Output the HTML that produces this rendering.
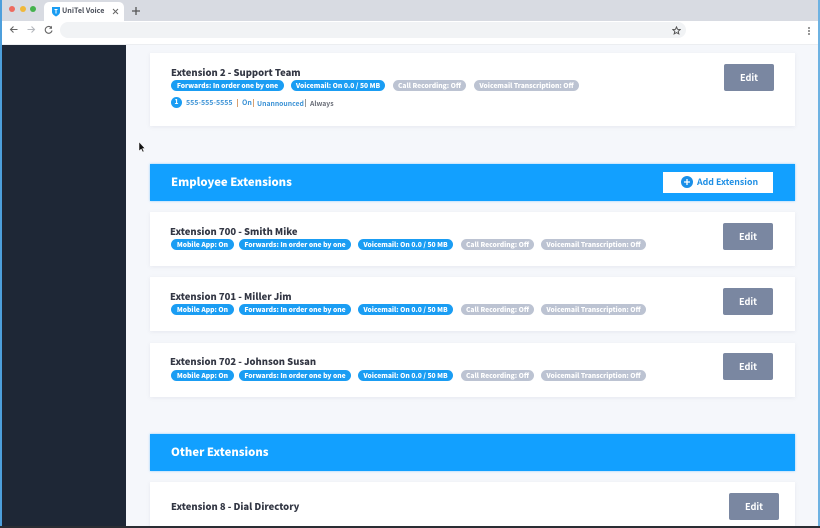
<!DOCTYPE html>
<html><head><meta charset="utf-8">
<style>
html,body{margin:0;padding:0;width:820px;height:528px;overflow:hidden;background:#f5f7fb}
body{position:relative;font-family:"Noto Sans CJK JP","Liberation Sans",sans-serif;font-weight:700;color:#3d4250}
div,span.a{position:absolute;box-sizing:border-box}
.t{white-space:nowrap;filter:blur(.35px)}
.card{background:#fff;box-shadow:0 1px 4px rgba(60,70,100,.08)}
.bar{background:#12a0ff;box-shadow:0 0 2px rgba(18,160,255,.5)}
.h{font-size:11.3px;line-height:14px;height:14px;color:#fff;left:171px;font-weight:900}
.n{font-size:9.45px;line-height:14px;height:14px;color:#333744;left:171px;font-weight:900}
.p{height:11px;border-radius:6px;background:#1a9df3;color:#fff;font-size:6.7px;line-height:11px;text-align:center;white-space:nowrap;overflow:hidden;filter:blur(.35px);font-weight:900}
.g{background:#bcc3d2}
.b{background:#7a87a1;border-radius:2px;color:#fff;font-size:9.2px;line-height:26px;height:27px;width:50px;text-align:center;filter:blur(.3px)}
</style></head><body>
<!-- browser chrome -->
<div style="left:0;top:0;width:820px;height:21px;background:#d8dbe2"></div>
<div style="left:0;top:21px;width:820px;height:24px;background:#fff"></div>
<div style="left:9px;top:6px;width:6px;height:6px;border-radius:50%;background:#ee6a5f"></div>
<div style="left:20px;top:6px;width:6px;height:6px;border-radius:50%;background:#f0b83a"></div>
<div style="left:30px;top:6px;width:6px;height:6px;border-radius:50%;background:#45b24e"></div>
<div style="left:44px;top:2px;width:80px;height:19px;background:#fff;border-radius:5px 5px 0 0"></div>
<svg style="position:absolute;left:51px;top:6px" width="10" height="11" viewBox="0 0 10 11"><path d="M1 1h8v5c0 2-2 3.500-4 4.500C3 9.500 1 8 1 6z" fill="#1a9df3"/><path d="M3.500 3.500h3M5 3.500v4" stroke="#fff" stroke-width="1"/></svg>
<div class="t" style="left:62px;top:5px;font-size:7.100px;line-height:12px;color:#4a4f5a;font-weight:700">UniTel Voice</div>
<svg style="position:absolute;left:112px;top:8px" width="7" height="7"><path d="M1 1l5 5M6 1l-5 5" stroke="#666" stroke-width="1"/></svg>
<svg style="position:absolute;left:132px;top:7px" width="8" height="8"><path d="M4 0v8M0 4h8" stroke="#555" stroke-width="1.300"/></svg>
<svg style="position:absolute;left:9px;top:25px" width="9" height="9"><path d="M8.500 4.500H1.500M4.500 1.500l-3 3 3 3" fill="none" stroke="#666" stroke-width="1.100"/></svg>
<svg style="position:absolute;left:27px;top:25px" width="9" height="9"><path d="M.5 4.500h7M4.500 1.500l3 3-3 3" fill="none" stroke="#b5b8bd" stroke-width="1.100"/></svg>
<svg style="position:absolute;left:44px;top:25px" width="9" height="9"><path d="M7.500 3A3.400 3.400 0 1 0 8 5.500" fill="none" stroke="#666" stroke-width="1.100"/><path d="M8 .8v3H5z" fill="#666"/></svg>
<div style="left:60px;top:22px;width:626px;height:16px;border-radius:8px;background:#f1f3f5"></div>
<svg style="position:absolute;left:672px;top:26px" width="9" height="9" viewBox="0 0 10 10"><path d="M5 1l1.200 2.700 2.900.3-2.200 1.900.7 2.900L5 7.300 2.400 8.800l.7-2.900L.9 4l2.900-.3z" fill="none" stroke="#555" stroke-width="1.100"/></svg>
<div style="left:808px;top:27px;width:2px;height:2px;background:#999"></div>
<div style="left:808px;top:30px;width:2px;height:2px;background:#999"></div>
<div style="left:808px;top:33px;width:2px;height:2px;background:#999"></div>
<div style="left:0;top:44px;width:820px;height:1px;background:#eceef1"></div>
<!-- sidebar -->
<div style="left:0;top:45px;width:126px;height:483px;background:#1e2736"></div>
<div style="left:0;top:0;width:2px;height:528px;background:#4d9fdc"></div>
<div style="left:818px;top:0;width:2px;height:528px;background:#6eb2e2"></div>
<!-- cursor -->
<svg style="position:absolute;left:138px;top:141px" width="8" height="12"><path d="M1 1v9l2.200-2 1.500 3 1.300-.6-1.500-2.900H7z" fill="#111" stroke="#fff" stroke-width=".5"/></svg>
<!-- card 1 -->
<div class="card" style="left:150px;top:53px;width:645px;height:73px"></div>
<div class="n t" style="top:65px">Extension 2 - Support Team</div>
<div class="p" style="left:171px;top:80px;width:113px">Forwards: In order one by one</div>
<div class="p" style="left:291px;top:80px;width:94px">Voicemail: On 0.0 / 50 MB</div>
<div class="p g" style="left:393px;top:80px;width:73px">Call Recording: Off</div>
<div class="p g" style="left:474px;top:80px;width:105px">Voicemail Transcription: Off</div>
<div style="left:171px;top:97px;width:11px;height:11px;border-radius:50%;background:#1a9df3"></div>
<div class="t" style="left:171px;top:97px;width:11px;text-align:center;color:#fff;font-size:7px;line-height:11px">1</div>
<div class="t" style="left:186px;top:97px;font-size:7px;line-height:13px;color:#3d93d6">555-555-5555</div>
<div style="left:237px;top:99px;width:1px;height:8px;background:#d9a070"></div>
<div class="t" style="left:242px;top:97px;font-size:7px;line-height:13px;color:#3d93d6">On</div>
<div style="left:253px;top:99px;width:1px;height:8px;background:#d9a070"></div>
<div class="t" style="left:257px;top:97px;font-size:6.800px;line-height:13px;color:#3d93d6">Unannounced</div>
<div style="left:305px;top:99px;width:1px;height:8px;background:#999"></div>
<div class="t" style="left:310px;top:97px;font-size:6.800px;line-height:13px;color:#6a6e78">Always</div>
<div class="b" style="left:724px;top:64px">Edit</div>
<!-- Employee bar -->
<div class="bar" style="left:150px;top:164px;width:645px;height:37px"></div>
<div class="h t" style="top:175px">Employee Extensions</div>
<div style="left:663px;top:172px;width:110px;height:21px;background:#fff"></div>
<div style="left:681px;top:176px;width:12px;height:12px;border-radius:50%;background:#1a8fe8"></div>
<svg style="position:absolute;left:681px;top:176px" width="12" height="12"><path d="M6 3v6M3 6h6" stroke="#fff" stroke-width="1.300"/></svg>
<div class="t" style="left:697px;top:175px;font-size:8.800px;line-height:14px;color:#1f8fe4">Add Extension</div>
<!-- rows -->
<div class="card" style="left:150px;top:212px;width:645px;height:54px"></div>
<div class="n t" style="top:224px;left:170px">Extension 700 - Smith Mike</div>
<div class="p" style="left:171px;top:239px;width:63px">Mobile App: On</div>
<div class="p" style="left:239px;top:239px;width:112px">Forwards: In order one by one</div>
<div class="p" style="left:358px;top:239px;width:95px">Voicemail: On 0.0 / 50 MB</div>
<div class="p g" style="left:461px;top:239px;width:73px">Call Recording: Off</div>
<div class="p g" style="left:541px;top:239px;width:105px">Voicemail Transcription: Off</div>
<div class="b" style="left:723px;top:223px">Edit</div>

<div class="card" style="left:150px;top:277px;width:645px;height:54px"></div>
<div class="n t" style="top:289px;left:170px">Extension 701 - Miller Jim</div>
<div class="p" style="left:171px;top:304px;width:63px">Mobile App: On</div>
<div class="p" style="left:239px;top:304px;width:112px">Forwards: In order one by one</div>
<div class="p" style="left:358px;top:304px;width:95px">Voicemail: On 0.0 / 50 MB</div>
<div class="p g" style="left:461px;top:304px;width:73px">Call Recording: Off</div>
<div class="p g" style="left:541px;top:304px;width:105px">Voicemail Transcription: Off</div>
<div class="b" style="left:723px;top:288px">Edit</div>

<div class="card" style="left:150px;top:343px;width:645px;height:54px"></div>
<div class="n t" style="top:354px;left:170px">Extension 702 - Johnson Susan</div>
<div class="p" style="left:171px;top:370px;width:63px">Mobile App: On</div>
<div class="p" style="left:239px;top:370px;width:112px">Forwards: In order one by one</div>
<div class="p" style="left:358px;top:370px;width:95px">Voicemail: On 0.0 / 50 MB</div>
<div class="p g" style="left:461px;top:370px;width:73px">Call Recording: Off</div>
<div class="p g" style="left:541px;top:370px;width:105px">Voicemail Transcription: Off</div>
<div class="b" style="left:723px;top:353px">Edit</div>
<!-- Other -->
<div class="bar" style="left:150px;top:434px;width:645px;height:37px"></div>
<div class="h t" style="top:445px">Other Extensions</div>
<div class="card" style="left:150px;top:482px;width:645px;height:46px"></div>
<div class="n t" style="top:499px">Extension 8 - Dial Directory</div>
<div class="b" style="left:729px;top:493px">Edit</div>
<div style="left:0;top:526px;width:820px;height:2px;background:#2a2d33"></div>
</body></html>
